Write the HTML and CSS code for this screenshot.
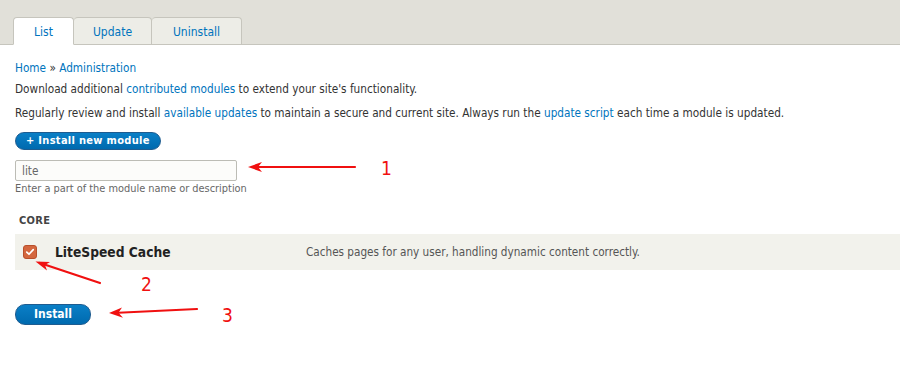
FILE: index.html
```html
<!DOCTYPE html>
<html lang="en">
<head>
<meta charset="utf-8">
<title>Extend</title>
<link rel="stylesheet" href="styles.css">
</head>
<body>
<div class="page">
  <header class="head">
    <nav class="tabs">
      <a class="tab active" href="#">List</a>
      <a class="tab" href="#">Update</a>
      <a class="tab" href="#">Uninstall</a>
    </nav>
  </header>
  <main class="content">
    <div class="crumbs"><a href="#">Home</a> » <a href="#">Administration</a></div>
    <p class="intro">Download additional <a href="#">contributed modules</a> to extend your site's functionality.</p>
    <p class="intro">Regularly review and install <a href="#">available updates</a> to maintain a secure and current site. Always run the <a href="#">update script</a> each time a module is updated.</p>
    <a class="btn btn-small" href="#">+ Install new module</a>
    <div class="filter">
      <input class="text-input" type="text" value="lite">
      <div class="hint">Enter a part of the module name or description</div>
    </div>
    <div class="group-title">CORE</div>
    <div class="module-row">
      <span class="checkbox"><svg viewBox="0 0 14 14" width="14" height="14"><path d="M3.2 7.2 L5.8 9.6 L10.8 4.2" fill="none" stroke="#fff" stroke-width="2" stroke-linecap="round" stroke-linejoin="round"/></svg></span>
      <span class="module-name">LiteSpeed Cache</span>
      <span class="module-desc">Caches pages for any user, handling dynamic content correctly.</span>
    </div>
    <a class="btn btn-install" href="#">Install</a>
  </main>
  <svg class="notes" width="900" height="374" viewBox="0 0 900 374">
    <g stroke="#f01010" stroke-width="2.2" fill="none" stroke-linecap="round">
      <line x1="355" y1="167" x2="252" y2="167"/>
      <line x1="100" y1="283" x2="40" y2="263"/>
      <line x1="197" y1="309" x2="113" y2="313"/>
    </g>
    <g fill="#f01010">
      <path d="M248 167 L262 162 L258 167 L262 172 Z"/>
      <path d="M35.5 261.5 L50 262 L45 265 L47 270.5 Z"/>
      <path d="M109 313 L122 307.5 L118.5 312.8 L123 317.8 Z"/>
    </g>
    <g class="num" fill="#f01010">
      <text x="381" y="175">1</text>
      <text x="141" y="291">2</text>
      <text x="222" y="322">3</text>
    </g>
  </svg>
</div>
</body>
</html>
```
FILE: styles.css
```css
html, body {
  margin: 0;
  padding: 0;
  background: #fff;
}
body {
  font-family: "DejaVu Sans", sans-serif;
  font-stretch: condensed;
  color: #333;
  font-size: 11.7px;
}
.page {
  position: relative;
  width: 900px;
  height: 374px;
  overflow: hidden;
}
a {
  color: #0074bd;
  text-decoration: none;
}
.head {
  background: #e1e0d9;
  height: 44px;
  border-bottom: 1px solid #c6c5bd;
  display: flex;
  align-items: flex-end;
  padding-left: 13px;
}
.tabs {
  display: flex;
  margin-bottom: -1px;
}
.tab {
  display: flex;
  align-items: center;
  justify-content: center;
  height: 28px;
  padding-top: 2px;
  box-sizing: border-box;
  border: 1px solid #c6c5bd;
  border-left: none;
  border-radius: 4px 4px 0 0;
  background: #ededE7;
  font-size: 12px;
}
.tab:first-child { border-left: 1px solid #c6c5bd; }
.tab.active {
  background: #fff;
  border-bottom-color: #fff;
  width: 61px;
}
.tab:nth-child(2) { width: 78px; }
.tab:nth-child(3) { width: 90px; }
.content {
  padding: 16px 15px 0 15px;
}
.crumbs {
  line-height: 15px;
  margin-bottom: 6px;
}
.intro {
  margin: 0 0 9px 0;
  line-height: 15px;
}
.btn {
  display: inline-block;
  background: #0074bd;
  background: linear-gradient(#0a7fc6, #006aaf);
  color: #fff;
  font-weight: bold;
  border-radius: 10px;
  border: 1px solid #1e5c90;
  box-sizing: border-box;
  text-align: center;
}
.btn-small {
  margin-top: 2px;
  height: 18px;
  line-height: 16px;
  padding: 0 10px;
  font-size: 11px;
  letter-spacing: 0.3px;
}
.filter {
  margin-top: 10px;
}
.text-input {
  display: block;
  width: 222px;
  height: 21px;
  box-sizing: border-box;
  border: 1px solid #bcbcb5;
  border-radius: 2px;
  background: #fcfcfa;
  font: inherit;
  font-size: 11.7px;
  color: #666;
  padding: 0 6px;
  margin: 0;
}
.hint {
  margin-top: 1px;
  color: #666;
  font-size: 10.9px;
  line-height: 14px;
}
.group-title {
  margin-top: 18px;
  padding-left: 4px;
  font-weight: bold;
  font-size: 11px;
  color: #444;
  line-height: 14px;
  letter-spacing: 0.3px;
}
.module-row {
  margin-top: 6px;
  margin-right: -15px;
  height: 36px;
  background: #f2f2ec;
  display: flex;
  align-items: center;
}
.checkbox {
  width: 14px;
  height: 14px;
  margin-left: 8px;
  border-radius: 3px;
  background: #d4673f;
  border: 1px solid #b8502c;
  box-sizing: border-box;
  display: flex;
  align-items: center;
  justify-content: center;
}
.checkbox svg { display: block; }
.module-name {
  margin-left: 18px;
  width: 251px;
  font-weight: bold;
  font-size: 13.7px;
  color: #222;
}
.module-desc {
  color: #555;
  font-size: 11.65px;
}
.btn-install {
  margin-top: 34px;
  width: 76px;
  height: 21px;
  line-height: 19px;
  font-size: 12px;
}
.notes {
  position: absolute;
  left: 0;
  top: 0;
  pointer-events: none;
}
.num text {
  font-family: "DejaVu Sans", sans-serif;
  font-size: 19px;
}
```
